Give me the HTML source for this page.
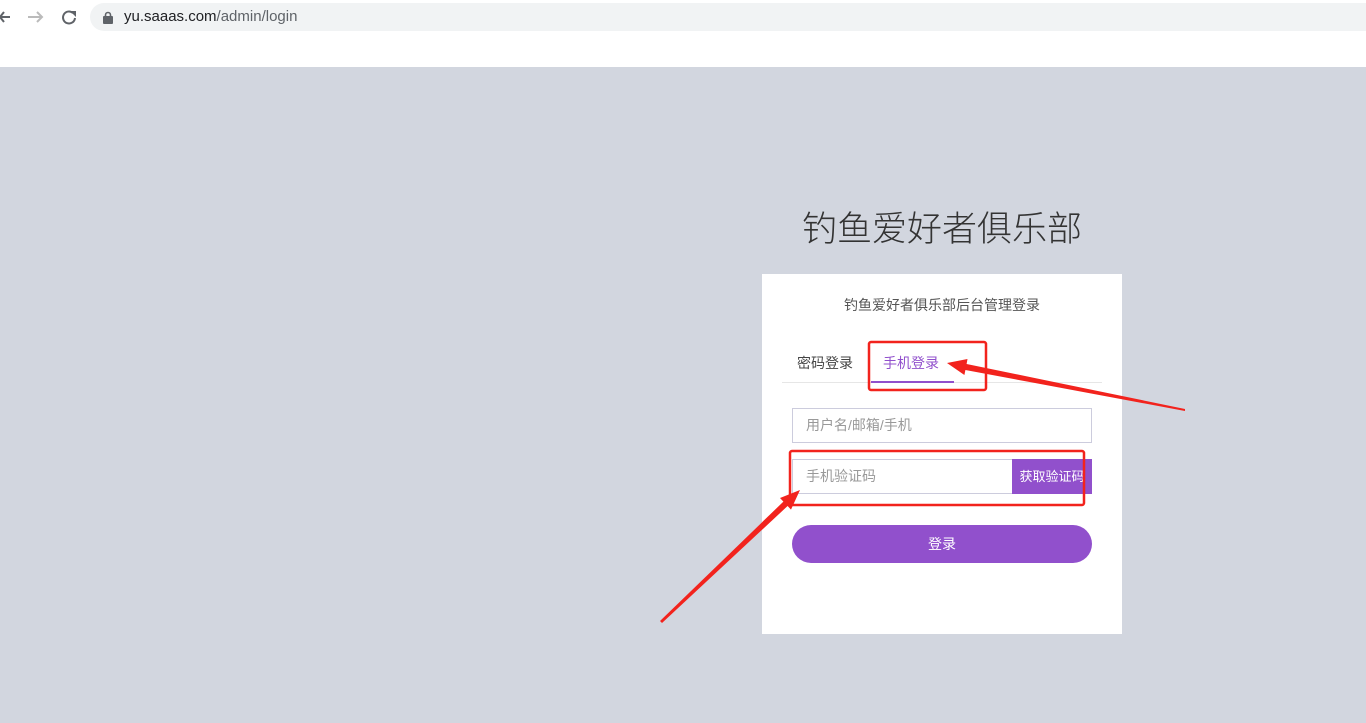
<!DOCTYPE html>
<html><head><meta charset="utf-8"><style>
*{margin:0;padding:0;box-sizing:border-box}
body{width:1366px;height:723px;overflow:hidden;background:#fff;font-family:"Liberation Sans","Noto Sans CJK SC",sans-serif;position:relative}
.bar{position:absolute;left:0;top:0;width:1366px;height:67px;background:#fff}
.url{position:absolute;left:90px;top:3px;width:1290px;height:28px;border-radius:14px;background:#f1f3f4}
.url span{position:absolute;left:34px;top:5px;font-size:15px;color:#202124}
.url span i{font-style:normal;color:#5f6368}
.main{position:absolute;left:0;top:67px;width:1366px;height:656px;background:#d2d6df}
.abs{position:absolute}
.title{left:762px;width:360px;top:201px;text-align:center;font-size:35px;color:#333;font-weight:300}
.card{left:762px;top:274px;width:360px;height:360px;background:#fff}
.sub{left:762px;width:360px;top:295px;text-align:center;font-size:14px;color:#555}
.tab{top:353px;font-size:14px;color:#444}
.inp{border:1px solid #ccd;background:#fff;font-size:14px;color:#999;padding-left:13px;line-height:33px}
</style></head><body>
<div class="bar">
<svg class="abs" style="left:0;top:8px" width="80" height="18"><path d="M10 9H0M4 4L0 9l4 5" stroke="#5f6368" stroke-width="2" fill="none"/><path d="M28 9h14M37 4l5 5-5 5" stroke="#bbb" stroke-width="2" fill="none"/><path d="M73 5a6 6 0 1 0 2 5" stroke="#5f6368" stroke-width="2" fill="none"/><path d="M70 3h6v6z" fill="#5f6368"/></svg>
<div class="url"><svg class="abs" style="left:13px;top:8px" width="10" height="13"><rect x="0" y="5" width="10" height="8" rx="1" fill="#5f6368"/><path d="M2.5 6V4a2.5 2.5 0 0 1 5 0v2" stroke="#5f6368" stroke-width="1.6" fill="none"/></svg><span>yu.saaas.com<i>/admin/login</i></span></div>
</div>
<div class="main"></div>
<div class="abs title">钓鱼爱好者俱乐部</div>
<div class="abs card"></div>
<div class="abs sub">钓鱼爱好者俱乐部后台管理登录</div>
<div class="abs tab" style="left:797px">密码登录</div>
<div class="abs tab" style="left:883px;color:#9150cc">手机登录</div>
<div class="abs" style="left:782px;top:382px;width:320px;height:1px;background:#e6e6e6"></div>
<div class="abs" style="left:871px;top:381px;width:83px;height:2px;background:#9150cc"></div>
<div class="abs inp" style="left:792px;top:408px;width:300px;height:35px">用户名/邮箱/手机</div>
<div class="abs inp" style="left:792px;top:459px;width:221px;height:35px">手机验证码</div>
<div class="abs" style="left:1012px;top:459px;width:80px;height:35px;background:#9150cc;color:#fff;font-size:13px;line-height:35px;text-align:center">获取验证码</div>
<div class="abs" style="left:792px;top:525px;width:300px;height:38px;border-radius:19px;background:#9150cc;color:#fff;font-size:14px;line-height:38px;text-align:center">登录</div>
<svg class="abs" style="left:0;top:0" width="1366" height="723">
<rect x="869" y="342" width="117" height="48" rx="2" fill="none" stroke="#f2231d" stroke-width="2.5"/>
<rect x="790" y="451" width="294" height="54" rx="2" fill="none" stroke="#f2231d" stroke-width="2.5"/>
<polygon points="1185,409 1185,411 965.4,370 964.4,375 947,363 967.5,359 966.6,364" fill="#f2231d"/>
<polygon points="660,621 662,623 787.6,506 791,509.6 800,490 780,498 783.4,501.6" fill="#f2231d"/>
</svg>
</body></html>
